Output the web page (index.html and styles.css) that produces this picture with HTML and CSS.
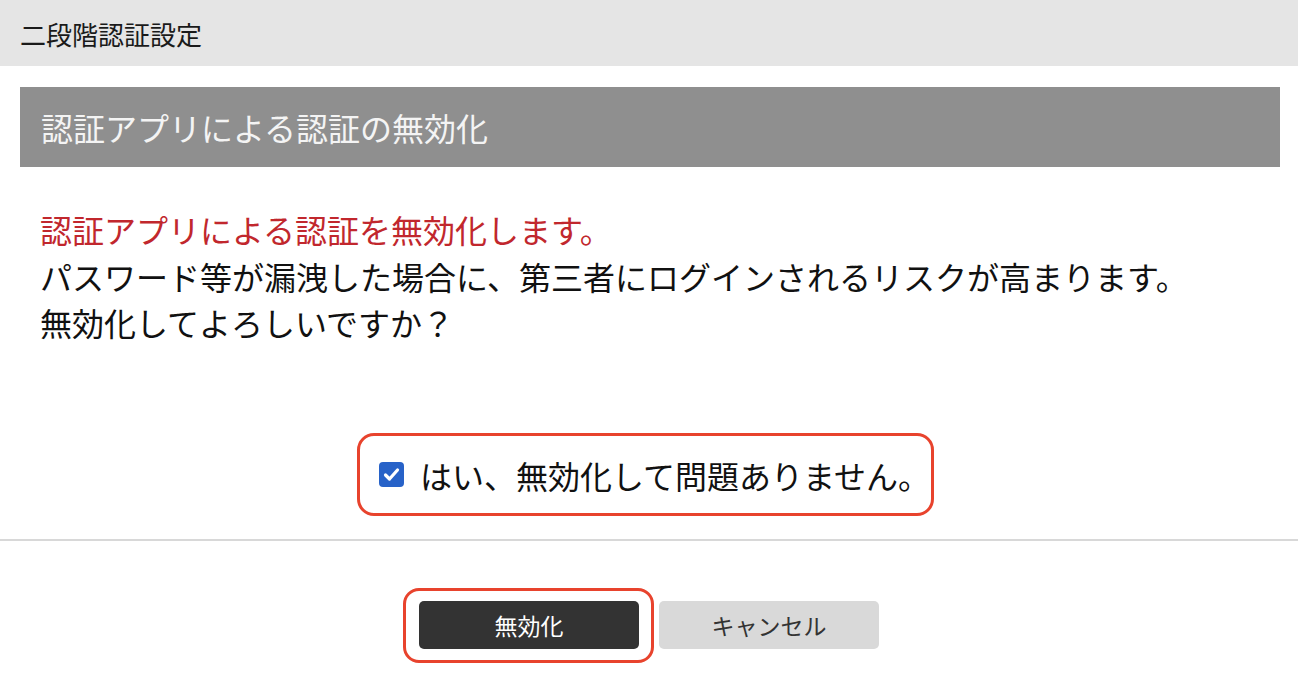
FILE: index.html
```html
<!DOCTYPE html>
<html lang="ja">
<head>
<meta charset="utf-8">
<title>二段階認証設定</title>
<link rel="stylesheet" href="styles.css">
</head>
<body>
<header class="page-header">二段階認証設定</header>
<section class="panel">
  <h2 class="panel-title">認証アプリによる認証の無効化</h2>
  <div class="message">
    <p class="warn">認証アプリによる認証を無効化します。</p>
    <p>パスワード等が漏洩した場合に、第三者にログインされるリスクが高まります。</p>
    <p>無効化してよろしいですか？</p>
  </div>
  <div class="confirm">
    <label class="confirm-label highlight highlight-label">
      <span class="checkbox" aria-hidden="true">
        <svg viewBox="0 0 25 25" width="25" height="25"><path d="M6.5 13 L10.5 17 L18.5 8" fill="none" stroke="#fff" stroke-width="3.2" stroke-linecap="round" stroke-linejoin="round"/></svg>
      </span>
      <span class="confirm-text">はい、無効化して問題ありません。</span>
    </label>
  </div>
</section>
<footer class="actions">
  <span class="highlight highlight-btn"><button class="btn btn-primary" type="button">無効化</button></span>
  <button class="btn btn-secondary" type="button">キャンセル</button>
</footer>
</body>
</html>
```

FILE: styles.css
```css
* { box-sizing: border-box; }

html, body {
  margin: 0;
  padding: 0;
  background: #fff;
}

body {
  font-family: "Noto Sans CJK JP", "Hiragino Sans", "Noto Sans", sans-serif;
  color: #111;
}

.page-header {
  height: 66px;
  background: #e5e5e5;
  padding-left: 20px;
  display: flex;
  align-items: center;
  font-size: 26px;
  color: #1a1a1a;
}

.panel {
  padding: 21px 18px 0 20px;
}

.panel-title {
  margin: 0;
  height: 80px;
  background: #8f8f8f;
  color: #f4f4f4;
  font-weight: 400;
  font-size: 32px;
  padding-left: 21px;
  display: flex;
  align-items: center;
}

.message {
  margin-top: 39px;
  padding-left: 20px;
  font-size: 32px;
  line-height: 46.5px;
}

.message p {
  margin: 0;
}

.message .warn {
  color: #c1272d;
}

.confirm {
  margin-top: 106px;
  padding-left: 9px;
  display: flex;
  justify-content: center;
}

.confirm-label {
  display: flex;
  align-items: center;
  gap: 16px;
  height: 46px;
  font-size: 32px;
  color: #111;
}

.checkbox {
  width: 25px;
  height: 25px;
  border-radius: 4px;
  background: #2762c8;
  display: flex;
}

.highlight {
  position: relative;
  display: flex;
}

.highlight::after {
  content: "";
  position: absolute;
  border: 3px solid #e8432d;
  pointer-events: none;
}

.highlight-label::after {
  top: -19px;
  bottom: -18px;
  left: -22px;
  right: -4px;
  border-radius: 17px;
}

.highlight-btn::after {
  top: -13px;
  bottom: -14px;
  left: -16px;
  right: -15px;
  border-radius: 16px;
}

.actions {
  margin-top: 41px;
  border-top: 2px solid #d8d8d8;
  padding: 60px 0 39px;
  display: flex;
  justify-content: center;
  gap: 20px;
}

.btn {
  width: 220px;
  height: 48px;
  border: none;
  border-radius: 5px;
  font-family: inherit;
  font-size: 23px;
  padding: 0;
  cursor: pointer;
}

.btn-primary {
  background: #333;
  color: #fff;
}

.btn-secondary {
  background: #d9d9d9;
  color: #333;
}
```
